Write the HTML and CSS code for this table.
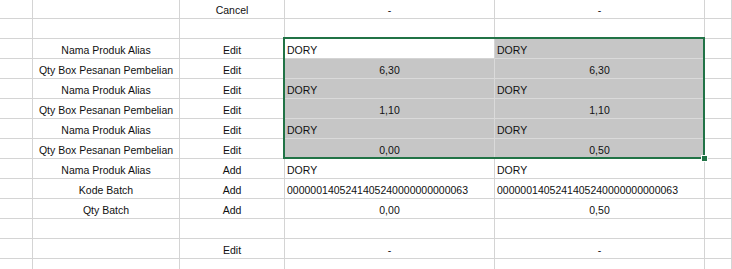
FILE: index.html
```html
<!DOCTYPE html>
<html>
<head>
<meta charset="utf-8">
<link rel="stylesheet" href="styles.css">
</head>
<body>
<div class="sheet">
  <div class="c"></div><div class="c"></div><div class="c ctr">Cancel</div><div class="c ctr">-</div><div class="c ctr">-</div><div class="c"></div>
  <div class="c"></div><div class="c"></div><div class="c"></div><div class="c"></div><div class="c"></div><div class="c"></div>
  <div class="c"></div><div class="c ctr">Nama Produk Alias</div><div class="c ctr">Edit</div><div class="c">DORY</div><div class="c sel">DORY</div><div class="c"></div>
  <div class="c"></div><div class="c ctr">Qty Box Pesanan Pembelian</div><div class="c ctr">Edit</div><div class="c ctr sel">6,30</div><div class="c ctr sel">6,30</div><div class="c"></div>
  <div class="c"></div><div class="c ctr">Nama Produk Alias</div><div class="c ctr">Edit</div><div class="c sel">DORY</div><div class="c sel">DORY</div><div class="c"></div>
  <div class="c"></div><div class="c ctr">Qty Box Pesanan Pembelian</div><div class="c ctr">Edit</div><div class="c ctr sel">1,10</div><div class="c ctr sel">1,10</div><div class="c"></div>
  <div class="c"></div><div class="c ctr">Nama Produk Alias</div><div class="c ctr">Edit</div><div class="c sel">DORY</div><div class="c sel">DORY</div><div class="c"></div>
  <div class="c"></div><div class="c ctr">Qty Box Pesanan Pembelian</div><div class="c ctr">Edit</div><div class="c ctr sel">0,00</div><div class="c ctr sel">0,50</div><div class="c"></div>
  <div class="c"></div><div class="c ctr">Nama Produk Alias</div><div class="c ctr">Add</div><div class="c">DORY</div><div class="c">DORY</div><div class="c"></div>
  <div class="c"></div><div class="c ctr">Kode Batch</div><div class="c ctr">Add</div><div class="c">0000001405241405240000000000063</div><div class="c">0000001405241405240000000000063</div><div class="c"></div>
  <div class="c"></div><div class="c ctr">Qty Batch</div><div class="c ctr">Add</div><div class="c ctr">0,00</div><div class="c ctr">0,50</div><div class="c"></div>
  <div class="c"></div><div class="c"></div><div class="c"></div><div class="c"></div><div class="c"></div><div class="c"></div>
  <div class="c"></div><div class="c"></div><div class="c ctr">Edit</div><div class="c ctr">-</div><div class="c ctr">-</div><div class="c"></div>
  <div class="c"></div><div class="c"></div><div class="c"></div><div class="c"></div><div class="c"></div><div class="c"></div>
  <div class="selection"></div>
  <div class="handle"></div>
</div>
</body>
</html>
```
FILE: styles.css
```css
html, body {
  margin: 0;
  padding: 0;
  background: #ffffff;
  overflow: hidden;
}
body {
  width: 732px;
  height: 269px;
  font-family: "Liberation Sans", Arial, sans-serif;
  font-size: 10.5px;
  color: #111111;
}
.sheet {
  position: relative;
  margin-top: -1px;
  display: grid;
  grid-template-columns: 33px 147px 105px 210px 210px 1fr;
  grid-auto-rows: 20px;
}
.c {
  box-sizing: border-box;
  border-right: 1px solid #d4d4d4;
  border-bottom: 1px solid #d4d4d4;
  display: flex;
  align-items: flex-end;
  padding: 0 2px 2px 2px;
  line-height: 12px;
  white-space: nowrap;
  overflow: visible;
}
.ctr {
  justify-content: center;
}
.sel {
  background: #c6c6c6;
  border-right-color: #dadada;
  border-bottom-color: #dadada;
}
.selection {
  position: absolute;
  left: 283px;
  top: 38px;
  width: 422px;
  height: 122px;
  box-sizing: border-box;
  border: 2px solid #217346;
  pointer-events: none;
}
.handle {
  position: absolute;
  left: 701px;
  top: 156px;
  width: 5px;
  height: 5px;
  background: #217346;
  border: 1px solid #ffffff;
}
```
